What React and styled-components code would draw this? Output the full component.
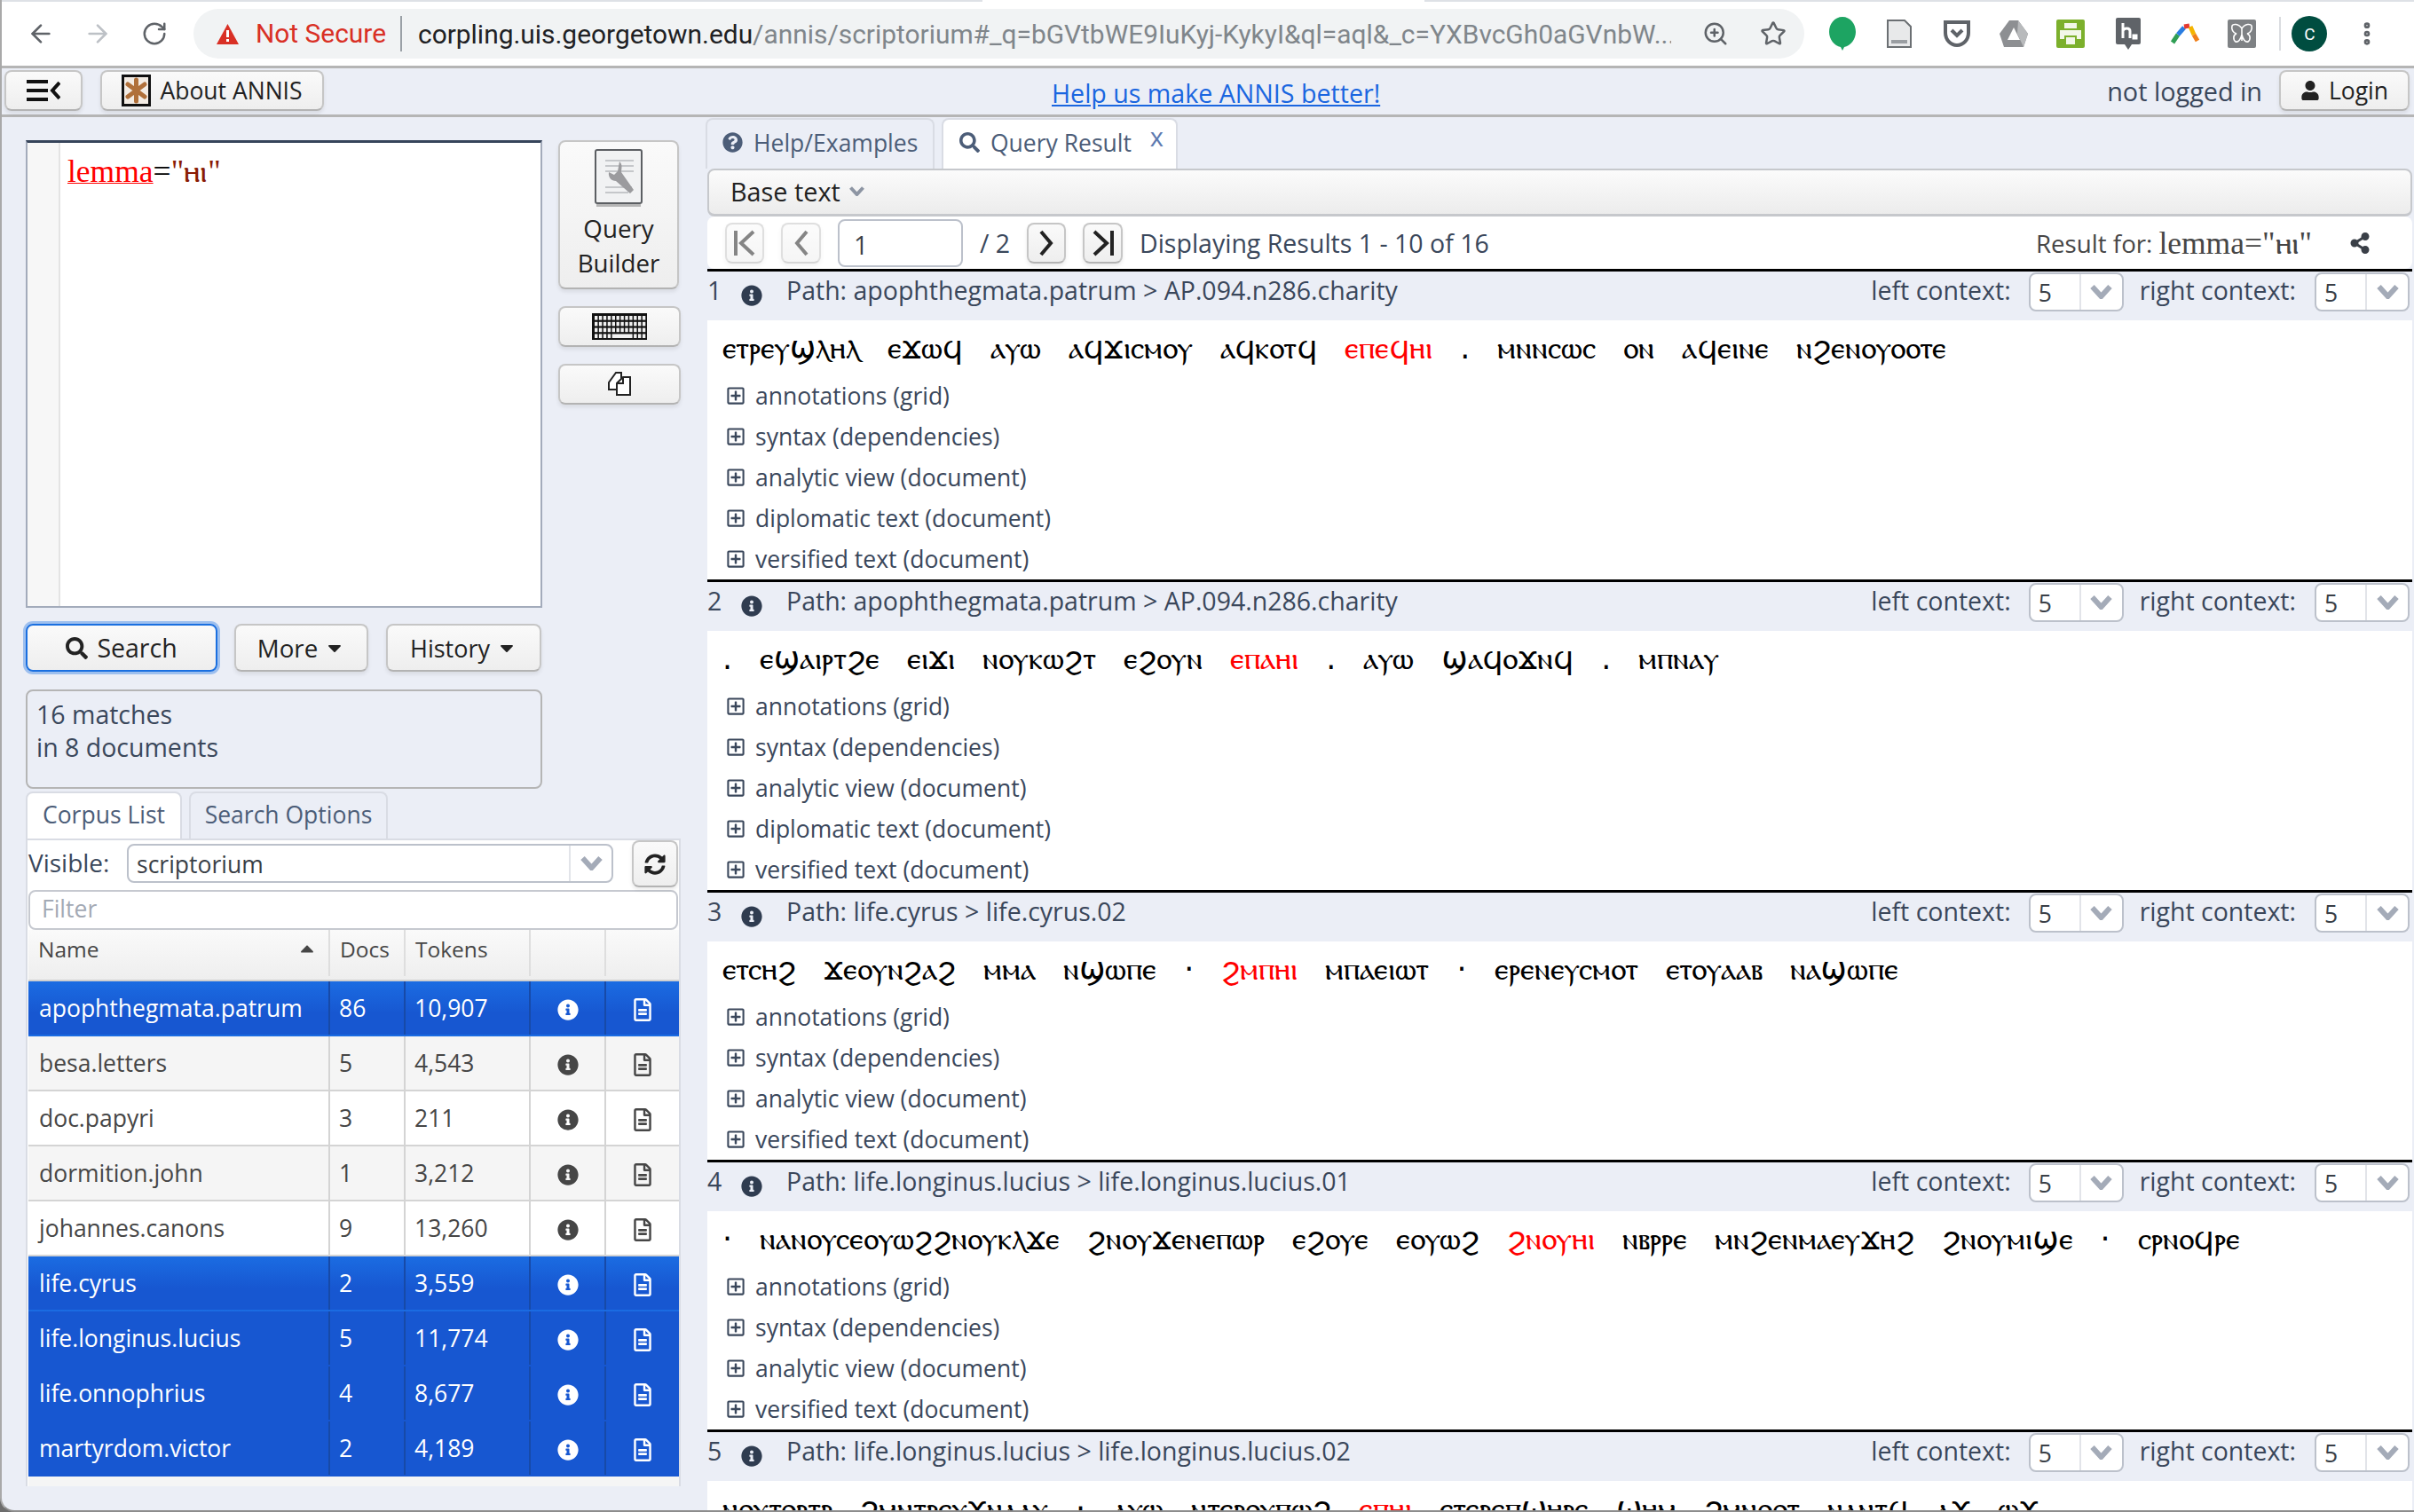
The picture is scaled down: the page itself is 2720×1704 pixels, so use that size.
import styled, { createGlobalStyle } from "styled-components";
import { ArrowLeft, ArrowRight, RotateCw, ZoomIn, Star, EllipsisVertical } from "lucide-react";
import {
  FaSearch,
  FaCaretDown,
  FaCaretUp,
  FaSyncAlt,
  FaInfoCircle,
  FaRegFileAlt,
  FaQuestionCircle,
  FaUser,
  FaShareAlt,
  FaRegPlusSquare,
} from "react-icons/fa";

const corpora = [
  { name: "apophthegmata.patrum", docs: "86", tokens: "10,907", selected: true, first: true },
  { name: "besa.letters", docs: "5", tokens: "4,543" },
  { name: "doc.papyri", docs: "3", tokens: "211" },
  { name: "dormition.john", docs: "1", tokens: "3,212" },
  { name: "johannes.canons", docs: "9", tokens: "13,260" },
  { name: "life.cyrus", docs: "2", tokens: "3,559", selected: true, first: true },
  { name: "life.longinus.lucius", docs: "5", tokens: "11,774", selected: true },
  { name: "life.onnophrius", docs: "4", tokens: "8,677", selected: true },
  { name: "martyrdom.victor", docs: "2", tokens: "4,189", selected: true },
];

const fullViews = [
  "annotations (grid)",
  "syntax (dependencies)",
  "analytic view (document)",
  "diplomatic text (document)",
  "versified text (document)",
];
const shortViews = [
  "annotations (grid)",
  "syntax (dependencies)",
  "analytic view (document)",
  "versified text (document)",
];

const results = [
  {
    path: "apophthegmata.patrum > AP.094.n286.charity",
    tokens: ["ⲉⲧⲣⲉⲩϣⲗⲏⲗ", "ⲉϫⲱϥ", "ⲁⲩⲱ", "ⲁϥϫⲓⲥⲙⲟⲩ", "ⲁϥⲕⲟⲧϥ", "*ⲉⲡⲉϥⲏⲓ", ".", "ⲙⲛⲛⲥⲱⲥ", "ⲟⲛ", "ⲁϥⲉⲓⲛⲉ", "ⲛϩⲉⲛⲟⲩⲟⲟⲧⲉ"],
    views: fullViews,
  },
  {
    path: "apophthegmata.patrum > AP.094.n286.charity",
    tokens: [".", "ⲉϣⲁⲓⲣⲧϩⲉ", "ⲉⲓϫⲓ", "ⲛⲟⲩⲕⲱϩⲧ", "ⲉϩⲟⲩⲛ", "*ⲉⲡⲁⲏⲓ", ".", "ⲁⲩⲱ", "ϣⲁϥⲟϫⲛϥ", ".", "ⲙⲡⲛⲁⲩ"],
    views: fullViews,
  },
  {
    path: "life.cyrus > life.cyrus.02",
    tokens: ["ⲉⲧⲥⲏϩ", "ϫⲉⲟⲩⲛϩⲁϩ", "ⲙⲙⲁ", "ⲛϣⲱⲡⲉ", "·", "*ϩⲙⲡⲏⲓ", "ⲙⲡⲁⲉⲓⲱⲧ", "·", "ⲉⲣⲉⲛⲉⲩⲥⲙⲟⲧ", "ⲉⲧⲟⲩⲁⲁⲃ", "ⲛⲁϣⲱⲡⲉ"],
    views: shortViews,
  },
  {
    path: "life.longinus.lucius > life.longinus.lucius.01",
    tokens: ["·", "ⲛⲁⲛⲟⲩⲥⲉⲟⲩⲱϩϩⲛⲟⲩⲕⲗϫⲉ", "ϩⲛⲟⲩϫⲉⲛⲉⲡⲱⲣ", "ⲉϩⲟⲩⲉ", "ⲉⲟⲩⲱϩ", "*ϩⲛⲟⲩⲏⲓ", "ⲛⲃⲣⲣⲉ", "ⲙⲛϩⲉⲛⲙⲁⲉⲩϫⲏϩ", "ϩⲛⲟⲩⲙⲓϣⲉ", "·", "ⲥⲣⲛⲟϥⲣⲉ"],
    views: shortViews,
  },
  {
    path: "life.longinus.lucius > life.longinus.lucius.02",
    tokens: ["ⲛⲟⲩⲧⲟⲣⲧⲣ", "ϩⲙⲛⲧⲣⲉⲩϫⲛⲁⲁⲩ", "·", "ⲁⲩⲱ", "ⲛⲧⲉⲣⲟⲩⲡⲱϩ", "*ⲉⲡⲏⲓ", "ⲉⲧⲉⲣⲉⲡϣⲏⲣⲉ", "ϣⲏⲙ", "ϩⲙⲛⲟⲟⲧ", "ⲛⲁⲛⲧϥ", "ⲁϫ", "ⲱϫ"],
    views: [],
  },
];

const GlobalStyle = createGlobalStyle`
  html, body {
    margin: 0;
    padding: 0;
    background: #6d6d6d;
  }
  * {
    box-sizing: border-box;
  }
`;

const Window = styled.div`
  width: 2720px;
  height: 1704px;
  display: flex;
  flex-direction: column;
  overflow: hidden;
  background: #ebeef6;
  border-left: 2px solid #a9a9a9;
  border-bottom: 2px solid #8d8d8d;
  border-bottom-left-radius: 16px;
  font-family: "Open Sans", sans-serif;
  font-size: 26.5px;
  color: #3a475b;
`;

/* browser chrome */
const Toolbar = styled.div`
  height: 77px;
  flex: none;
  display: flex;
  align-items: center;
  padding: 2px 0 0 26px;
  background: linear-gradient(to right, #dee1e6 1105px, #fff 1105px, #fff 1603px, #dee1e6 1603px) top / 100% 2px no-repeat, #fff;
  border-bottom: 3px solid #b5b5b5;
  font-family: Roboto, sans-serif;
`;

const NavButton = styled.span`
  width: 36px;
  margin-right: 28px;
  display: flex;
  justify-content: center;
  color: ${(p) => (p.$off ? "#bdc1c6" : "#5f6368")};
`;

const Omnibox = styled.div`
  width: 1815px;
  height: 56px;
  margin-left: -2px;
  padding: 0 16px 0 26px;
  display: flex;
  align-items: center;
  background: #f1f3f4;
  border-radius: 28px;
  font-size: 29.9px;
  color: #80868b;
  white-space: nowrap;
`;

const NotSecure = styled.span`
  margin-left: 19px;
  padding-right: 16px;
  border-right: 2px solid #9aa0a6;
  color: #d93025;
  line-height: 40px;
`;

const Url = styled.span`
  margin-left: 18px;
  width: 1412px;
  overflow: hidden;
  b {
    font-weight: 400;
    color: #202124;
  }
`;

const OmniIcon = styled.span`
  display: flex;
  color: #5f6368;
  margin-left: 35px;
`;

const ExtSpacer = styled.span`
  width: 11px;
  flex: none;
`;

const ExtIcon = styled.span`
  width: 64.3px;
  flex: none;
  display: flex;
  justify-content: center;
  align-items: center;
`;

const ExtDivider = styled.span`
  width: 2px;
  height: 38px;
  margin: 0 12px 0 10px;
  background: #dadce0;
`;

const Avatar = styled.span`
  width: 40px;
  height: 40px;
  border-radius: 50%;
  background: #004d40;
  color: #fff;
  font-size: 19px;
  display: flex;
  align-items: center;
  justify-content: center;
`;

const ExtMenu = styled.span`
  display: flex;
  margin-left: 29px;
  color: #5f6368;
`;

/* app header */
const AppHeader = styled.header`
  height: 55px;
  flex: none;
  display: flex;
  align-items: center;
  padding: 0 5px 2px 3px;
  border-bottom: 3px solid #b5b5b5;
`;

const Button = styled.button`
  height: ${(p) => p.$height || 46}px;
  width: ${(p) => (p.$width ? `${p.$width}px` : "auto")};
  margin-left: ${(p) => p.$left || 0}px;
  flex: none;
  padding: 0;
  display: inline-flex;
  flex-direction: ${(p) => (p.$stack ? "column" : "row")};
  align-items: center;
  justify-content: center;
  gap: ${(p) => p.$gap ?? 10}px;
  background: linear-gradient(#fafafa, #eeeeee);
  border: 2px solid #c6c6c6;
  border-bottom-color: #b3b3b3;
  border-radius: 8px;
  box-shadow: 0 3px 4px rgba(0, 0, 0, 0.08);
  color: #222;
  font-family: inherit;
  font-size: ${(p) => p.$size || 26.5}px;
  opacity: ${(p) => (p.$dim ? 0.55 : 1)};
`;

const FocusButton = styled(Button)`
  border-color: #1a6fe0;
  box-shadow: 0 0 0 3px #9dbfee;
`;

const HelpLink = styled.a`
  margin: 4px 0 0 820px;
  color: #1a66e0;
  font-size: 28.6px;
  text-decoration: underline;
`;

const UserState = styled.span`
  margin: 1px 19px 0 auto;
  font-size: 28.8px;
`;

const Main = styled.div`
  flex: 1;
  min-height: 0;
  display: flex;
`;

/* left side */
const LeftPanel = styled.aside`
  width: 795px;
  flex: none;
  padding: 26px 0 0 27px;
`;

const QueryRow = styled.div`
  display: flex;
  gap: 18px;
  height: 527px;
`;

const Editor = styled.div`
  width: 582px;
  display: flex;
  background: #fff;
  border: 2px solid #a3abbb;
  border-top: 3px solid #36445a;
`;

const Gutter = styled.div`
  width: 37px;
  background: #f7f7f7;
  border-right: 2px solid #e4e4e4;
`;

const QueryText = styled.div`
  padding: 12px 0 0 8px;
  font-family: "Liberation Serif", "DejaVu Serif", "DejaVu Sans", serif;
  font-size: 35.5px;
  line-height: 40px;
  color: #000;
`;

const Lemma = styled.span`
  color: #f00;
  text-decoration: underline;
  text-decoration-thickness: 1px;
  text-underline-offset: 1px;
`;

const QueryValue = styled.span`
  color: #8a1c05;
`;

const SideButtons = styled.div`
  width: 138px;
  display: flex;
  flex-direction: column;
  gap: 19px;
`;

const BuilderLabel = styled.span`
  line-height: 39px;
  margin-top: 4px;
  text-align: center;
  font-size: 27.7px;
`;

const ActionRow = styled.div`
  display: flex;
  margin-top: 18px;
`;

const StatusBox = styled.div`
  width: 582px;
  height: 112px;
  margin-top: 20px;
  padding: 8px 10px;
  line-height: 37px;
  border: 2px solid #b5b5b5;
  border-radius: 8px;
  font-size: 28.5px;
`;

const TabStrip = styled.div`
  display: flex;
  gap: ${(p) => p.$gap}px;
  height: ${(p) => p.$height}px;
  margin-top: ${(p) => p.$top}px;
  margin-left: ${(p) => p.$left || 0}px;
  flex: none;
`;

const Tab = styled.div`
  width: ${(p) => p.$width}px;
  display: flex;
  align-items: center;
  justify-content: ${(p) => (p.$center ? "center" : "flex-start")};
  gap: 12px;
  padding: 0 0 4px ${(p) => p.$pad || 0}px;
  position: relative;
  background: ${(p) => (p.$active ? "#fff" : "transparent")};
  border: 2px solid #d9dce4;
  border-bottom: 0;
  border-radius: 8px 8px 0 0;
  color: #4c5d78;
`;

const TabClose = styled.span`
  position: absolute;
  top: -1px;
  right: 14px;
  font-size: 29px;
  color: #5d7ab0;
`;

const CorpusPanel = styled.div`
  width: 738px;
  height: 730px;
  background: #fff;
  border: 2px solid #d9dce4;
  border-bottom: 0;
  overflow: hidden;
`;

const VisibleRow = styled.div`
  height: 56px;
  display: flex;
  align-items: flex-start;
`;

const VisibleLabel = styled.span`
  width: 112px;
  line-height: 50px;
  padding-left: 1px;
  font-size: 28px;
`;

const Combo = styled.div`
  width: ${(p) => p.$width}px;
  height: 44px;
  flex: none;
  margin: ${(p) => p.$margin || 0};
  display: flex;
  background: #fff;
  border: 2px solid #bcc1cb;
  border-radius: 8px;
  font-size: 26.5px;
  line-height: 42px;
  overflow: hidden;
`;

const ComboValue = styled.span`
  flex: 1;
  padding-left: 9px;
  color: #3a3f47;
`;

const ComboArrow = styled.span`
  width: 48px;
  flex: none;
  display: flex;
  align-items: center;
  justify-content: center;
  border-left: 2px solid #e2e4e9;
  color: #a4abb8;
`;

const FilterInput = styled.div`
  height: 45px;
  margin: 0 1px;
  padding-left: 13px;
  border: 2px solid #c6c9d0;
  border-radius: 8px;
  font-size: 26.5px;
  line-height: 38px;
  color: #a3a9b4;
`;

const CorpusTable = styled.div`
  margin-left: 1px;
  width: 733px;
`;

const columns = "340px 85px 141px 85px 82px";

const HeadRow = styled.div`
  display: grid;
  grid-template-columns: ${columns};
  height: 58px;
  background: linear-gradient(#fafafa, #eeeeee);
  border-bottom: 2px solid #d0d0d0;
  font-size: 24.5px;
  color: #464646;
`;

const HeadCell = styled.div`
  padding: 4px 0 0 11px;
  line-height: 36px;
  display: flex;
  justify-content: space-between;
  border-right: ${(p) => (p.$last ? 0 : "2px solid #dedede")};
  margin-bottom: 4px;
`;

const SortMark = styled.span`
  margin: 2px 12px 0 0;
  color: #464646;
`;

const Row = styled.div`
  display: grid;
  grid-template-columns: ${columns};
  height: 62px;
  background: ${(p) =>
    p.$selected
      ? p.$first
        ? "linear-gradient(#1b6ce2, #1757d1 60%)"
        : "#1757d1"
      : p.$odd
        ? "#f5f5f5"
        : "#fff"};
  color: ${(p) => (p.$selected ? "#fff" : "#464646")};
  border-bottom: 2px solid ${(p) => (p.$selected ? "transparent" : "#d4d4d4")};
`;

const Cell = styled.div`
  display: flex;
  align-items: center;
  justify-content: ${(p) => (p.$icon ? "center" : "flex-start")};
  padding-left: ${(p) => p.$pad || 0}px;
  padding-top: ${(p) => (p.$icon ? 4 : 0)}px;
  border-right: ${(p) => (p.$last ? "0" : `2px solid ${p.$selected ? "#174aa8" : "#d4d4d4"}`)};
`;

/* right side */
const RightPanel = styled.section`
  flex: 1;
  min-width: 0;
  display: flex;
  flex-direction: column;
`;

const BaseBar = styled.div`
  height: 54px;
  margin: 0 2px 0 0;
  padding: 0 0 2px 24px;
  display: flex;
  align-items: center;
  gap: 10px;
  flex: none;
  background: linear-gradient(#fbfbfb, #ececec);
  border: 2px solid #c6c8cc;
  border-bottom-width: 3px;
  border-radius: 8px;
  color: #222;
  font-size: 28.8px;
`;

const BaseChevron = styled.span`
  display: flex;
  color: #8d95a3;
`;

const PagerBar = styled.div`
  height: 59px;
  margin: 0 2px 0 0;
  padding: 0 47px 0 20px;
  flex: none;
  display: flex;
  align-items: center;
  background: #fff;
  border-radius: 8px;
  font-size: 28.5px;
`;

const PageInput = styled.div`
  width: 141px;
  height: 54px;
  margin-left: 19px;
  padding: 8px 0 0 16px;
  background: #fff;
  border: 2px solid #bcc1cb;
  border-radius: 8px;
  color: #3a3f47;
`;

const PageCount = styled.span`
  width: 53px;
  margin: 0 0 0 19px;
  flex: none;
`;

const PageInfo = styled.span`
  margin-left: 19px;
`;

const ResultFor = styled.span`
  margin-left: auto;
  display: flex;
  align-items: center;
  color: #464646;
  font-size: 27.7px;
`;

const SerifQuery = styled.span`
  margin-left: 7px;
  font-family: "Liberation Serif", "DejaVu Serif", "DejaVu Sans", serif;
  font-size: 35.5px;
`;

const ShareIcon = styled.span`
  display: flex;
  margin-left: 42px;
  color: #3a3f47;
`;

const ResultList = styled.div`
  flex: 1;
  min-height: 0;
  overflow: hidden;
  margin-right: 2px;
  background: #fff;
`;

const ResultBlock = styled.article`
  border-top: 3px solid #000;
`;

const ResultHead = styled.div`
  height: 55px;
  display: flex;
  align-items: flex-start;
  padding-right: 3px;
  background: #ebeef6;
  font-size: 28.5px;
  line-height: 42px;
`;

const ResultNumber = styled.span`
  width: 38px;
  flex: none;
`;

const ResultInfo = styled.span`
  width: 51px;
  flex: none;
  display: flex;
  padding-top: 15px;
  color: #2f3c50;
`;

const ResultPath = styled.span`
  flex: 1;
`;

const ContextLabel = styled.span`
  margin-left: ${(p) => p.$left}px;
`;

const TokenLine = styled.div`
  height: 62px;
  padding: 0 0 0 17px;
  display: flex;
  align-items: center;
  gap: 31px;
  white-space: nowrap;
  font-family: "DejaVu Sans", sans-serif;
  font-size: 34.8px;
  color: #000;
`;

const Token = styled.span`
  color: ${(p) => (p.$hit ? "#f00" : "#000")};
`;

const ViewRow = styled.div`
  height: 46px;
  padding-left: 21px;
  display: flex;
  align-items: center;
  gap: 11px;
`;

const ComboChevron = () => (
  <svg width="25" height="16" viewBox="0 0 25 16" fill="none" stroke="currentColor" strokeWidth="6">
    <path d="M2.5 2 12.5 13l10-11" />
  </svg>
);

const BaseArrow = () => (
  <svg width="17" height="11" viewBox="0 0 17 11" fill="none" stroke="currentColor" strokeWidth="4">
    <path d="m1.5 1.5 7 7.500 7-7.500" />
  </svg>
);

const BackStep = ({ flip }) => (
  <svg width="26" height="32" viewBox="0 0 26 32" fill="none" stroke="currentColor" strokeWidth="4" style={flip ? { transform: "scaleX(-1)" } : undefined}>
    <path d="M3 2v28M23 3 9 16l14 13" />
  </svg>
);

const Chevron = ({ flip }) => (
  <svg width="18" height="32" viewBox="0 0 18 32" fill="none" stroke="currentColor" strokeWidth="4" style={flip ? { transform: "scaleX(-1)" } : undefined}>
    <path d="M15 3 4 16l11 13" />
  </svg>
);

const MenuIcon = () => (
  <svg width="38" height="26" viewBox="0 0 38 26" fill="#111">
    <path d="M0 1h24v4H0zM0 11h24v4H0zM0 21h24v4H0z" />
    <path d="M37 4 29 13l8 9" fill="none" stroke="#111" strokeWidth="4" />
  </svg>
);

const AnnisLogo = () => (
  <svg width="33" height="36" viewBox="0 0 33 36">
    <rect x="1.5" y="1.5" width="30" height="33" fill="#f3ece4" stroke="#111" strokeWidth="3" />
    <g stroke="#b0703a" strokeWidth="5" strokeLinecap="round">
      <path d="M16.500 6v24M7 11l19 14M26 11 7 25" />
    </g>
  </svg>
);

const BuilderIcon = () => (
  <svg width="54" height="66" viewBox="0 0 54 66">
    <rect x="1" y="1" width="52" height="60" rx="2" fill="#f1f2f3" stroke="#5c5f63" strokeWidth="2" />
    <rect x="2" y="62" width="50" height="3" fill="#b5b5b5" />
    <g fill="#c5c7ca">
      <rect x="12" y="12" width="32" height="2" />
      <rect x="12" y="18" width="32" height="2" />
      <rect x="12" y="24" width="32" height="2" />
      <rect x="12" y="42" width="30" height="2" />
      <rect x="12" y="48" width="26" height="2" />
    </g>
    <path d="M28 14c4 4 2 8 2 12l14 20-4 4-16-14c-5 0-9-4-8-10l6 3 4-4z" fill="#9b9b9e" />
  </svg>
);

const KeyboardIcon = () => {
  const keys = [];
  for (let r = 0; r < 4; r++) {
    for (let c = 0; c < 12; c++) {
      if (r === 3 && c > 3 && c < 9) continue;
      keys.push(<rect key={`${r}-${c}`} x={3 + c * 4.9} y={3 + r * 6.8} width="3.4" height="4.6" fill="#f0f0f0" />);
    }
  }
  return (
    <svg width="62" height="30" viewBox="0 0 62 30">
      <rect width="62" height="30" fill="#111" />
      {keys}
      <rect x="22.6" y="23.4" width="23" height="4.6" fill="#f0f0f0" />
    </svg>
  );
};

const CopyIcon = () => (
  <svg width="28" height="28" viewBox="0 0 28 28" fill="#fff" stroke="#222" strokeWidth="2">
    <path d="M2 12 10 1h6v17l-3 2H2z" />
    <path d="M11 26V13l7-7h8v20z" />
    <path d="M18 6v7h-7" fill="none" />
  </svg>
);

const WarnIcon = () => (
  <svg width="25" height="23" viewBox="0 0 25 23">
    <path d="M12.500 0 25 23H0z" fill="#d93025" />
    <path d="M11 7h3v8h-3zM11 17h3v3h-3z" fill="#fff" />
  </svg>
);

const PocketIcon = () => (
  <svg width="32" height="32" viewBox="0 0 32 32" fill="none">
    <path d="M3 3h26v12a13 14 0 0 1-26 0z" stroke="#5f6368" strokeWidth="4" fill="#fff" />
    <path d="m10 12 6 6 6-6" stroke="#5f6368" strokeWidth="4" />
  </svg>
);

const HypoIcon = () => (
  <svg width="28" height="36" viewBox="0 0 28 36">
    <path d="M2 0h24a2 2 0 0 1 2 2v26a2 2 0 0 1-2 2h-8l-4 6-4-6H2a2 2 0 0 1-2-2V2a2 2 0 0 1 2-2z" fill="#5f6368" />
    <path d="M8 6v17M8 15c1-4 8-4 8 0v8M20 20h3v3h-3z" fill="none" stroke="#fff" strokeWidth="3" />
  </svg>
);

const ExtensionIcons = () => (
  <>
    <ExtIcon>
      <svg width="30" height="38" viewBox="0 0 30 38">
        <path d="M15 0c9 0 15 8 15 17 0 8-6 16-13 17l-2 4-2-4C6 33 0 25 0 17 0 8 6 0 15 0z" fill="#1da462" />
      </svg>
    </ExtIcon>
    <ExtIcon>
      <svg width="28" height="32" viewBox="0 0 28 32">
        <path d="M1 1h19l7 7v23H1z" fill="#e8e9ea" stroke="#6b6f73" strokeWidth="2" />
        <rect x="5" y="23" width="18" height="4" fill="#9a9ea2" />
      </svg>
    </ExtIcon>
    <ExtIcon>
      <PocketIcon />
    </ExtIcon>
    <ExtIcon>
      <svg width="32" height="30" viewBox="0 0 32 30">
        <path d="M11 0h10l11 15-5 15H5L0 15z" fill="#8d8f92" />
        <path d="M16 8 9 22h14z" fill="#fff" />
        <path d="M21 0l11 15-5 15-7-15z" fill="#b8babc" />
      </svg>
    </ExtIcon>
    <ExtIcon>
      <svg width="32" height="32" viewBox="0 0 32 32">
        <rect width="32" height="32" rx="2" fill="#7cb02c" />
        <path d="M9 4h14v6H9zM4 12h24v10h-5v-4H9v4H4zM11 20h10v8H11z" fill="#f2f7e8" />
      </svg>
    </ExtIcon>
    <ExtIcon>
      <HypoIcon />
    </ExtIcon>
    <ExtIcon>
      <svg width="34" height="26" viewBox="0 0 34 26" fill="none" strokeWidth="5">
        <path d="M3 23 9 14" stroke="#2f9e54" />
        <path d="M9 14 16 6" stroke="#2a7de1" />
        <path d="M16 5 22 4" stroke="#e5392f" />
        <path d="M23 5 27 14" stroke="#f4b400" />
        <path d="M27 14 31 21" stroke="#ef7f1a" />
      </svg>
    </ExtIcon>
    <ExtIcon>
      <svg width="32" height="32" viewBox="0 0 32 32" fill="none">
        <rect width="32" height="32" rx="2" fill="#7e8184" />
        <path d="M16 10C12 4 6 5 5 7c-1 4 1 8 5 9-4 1-4 7-1 9 3 1 6-3 7-8 1 5 4 9 7 8 3-2 3-8-1-9 4-1 6-5 5-9-1-2-7-3-11 3zM16 10v14" stroke="#fff" strokeWidth="1.6" />
      </svg>
    </ExtIcon>
  </>
);

const tokenKey = (t, i) => `${t}-${i}`;

const ResultItem = ({ result, index }) => (
  <ResultBlock>
    <ResultHead>
      <ResultNumber>{index + 1}</ResultNumber>
      <ResultInfo>
        <FaInfoCircle size={24} />
      </ResultInfo>
      <ResultPath>Path: {result.path}</ResultPath>
      <ContextLabel $left={0}>left context:</ContextLabel>
      <Combo $width={107} $margin="1px 0 0 20px">
        <ComboValue>5</ComboValue>
        <ComboArrow>
          <ComboChevron />
        </ComboArrow>
      </Combo>
      <ContextLabel $left={18}>right context:</ContextLabel>
      <Combo $width={107} $margin="1px 0 0 21px">
        <ComboValue>5</ComboValue>
        <ComboArrow>
          <ComboChevron />
        </ComboArrow>
      </Combo>
    </ResultHead>
    <TokenLine>
      {result.tokens.map((t, i) => (
        <Token key={tokenKey(t, i)} $hit={t.startsWith("*")}>
          {t.replace("*", "")}
        </Token>
      ))}
    </TokenLine>
    {result.views.map((v) => (
      <ViewRow key={v}>
        <FaRegPlusSquare size={22} />
        {v}
      </ViewRow>
    ))}
  </ResultBlock>
);

const App = () => {
  return (
    <Window>
      <GlobalStyle />
      <Toolbar>
        <NavButton>
          <ArrowLeft size={32} strokeWidth={2} />
        </NavButton>
        <NavButton $off>
          <ArrowRight size={32} strokeWidth={2} />
        </NavButton>
        <NavButton>
          <RotateCw size={30} strokeWidth={2} />
        </NavButton>
        <Omnibox>
          <WarnIcon />
          <NotSecure>Not Secure</NotSecure>
          <Url>
            <b>corpling.uis.georgetown.edu</b>/annis/scriptorium#_q=bGVtbWE9IuKyj-KykyI&ql=aql&_c=YXBvcGh0aGVnbW...
          </Url>
          <OmniIcon>
            <ZoomIn size={30} strokeWidth={2} />
          </OmniIcon>
          <OmniIcon>
            <Star size={30} strokeWidth={2} />
          </OmniIcon>
        </Omnibox>
        <ExtSpacer />
        <ExtensionIcons />
        <ExtDivider />
        <Avatar>C</Avatar>
        <ExtMenu>
          <EllipsisVertical size={32} strokeWidth={3} />
        </ExtMenu>
      </Toolbar>

      <AppHeader>
        <Button $width={88}>
          <MenuIcon />
        </Button>
        <Button $width={252} $left={20} $gap={10}>
          <AnnisLogo />
          About ANNIS
        </Button>
        <HelpLink href="#">Help us make ANNIS better!</HelpLink>
        <UserState>not logged in</UserState>
        <Button $width={147} $gap={10}>
          <FaUser size={22} />
          Login
        </Button>
      </AppHeader>

      <Main>
        <LeftPanel>
          <QueryRow>
            <Editor>
              <Gutter />
              <QueryText>
                <Lemma>lemma</Lemma>=<QueryValue>"ⲏⲓ"</QueryValue>
              </QueryText>
            </Editor>
            <SideButtons>
              <Button as="div" $height={168} $width={136} $stack $gap={0}>
                <BuilderIcon />
                <BuilderLabel>
                  Query
                  <br />
                  Builder
                </BuilderLabel>
              </Button>
              <Button $width={138}>
                <KeyboardIcon />
              </Button>
              <Button $width={138}>
                <CopyIcon />
              </Button>
            </SideButtons>
          </QueryRow>

          <ActionRow>
            <FocusButton $width={216} $height={54} $size={28.5}>
              <FaSearch size={25} />
              Search
            </FocusButton>
            <Button $width={151} $height={54} $left={19} $gap={7} $size={27.7}>
              More
              <FaCaretDown size={24} />
            </Button>
            <Button $width={175} $height={54} $left={20} $gap={7} $size={27}>
              History
              <FaCaretDown size={24} />
            </Button>
          </ActionRow>

          <StatusBox>
            16 matches
            <br />
            in 8 documents
          </StatusBox>

          <TabStrip $gap={8} $height={53} $top={3}>
            <Tab $width={176} $active $center>
              Corpus List
            </Tab>
            <Tab $width={224} $center>
              Search Options
            </Tab>
          </TabStrip>

          <CorpusPanel>
            <VisibleRow>
              <VisibleLabel>Visible:</VisibleLabel>
              <Combo $width={548} $margin="4px 0 0 0">
                <ComboValue>scriptorium</ComboValue>
                <ComboArrow>
                  <ComboChevron />
                </ComboArrow>
              </Combo>
              <Button $width={52} $height={53} $left={21}>
                <FaSyncAlt size={24} />
              </Button>
            </VisibleRow>
            <FilterInput>Filter</FilterInput>
            <CorpusTable>
              <HeadRow>
                <HeadCell>
                  Name
                  <SortMark>
                    <FaCaretUp size={24} />
                  </SortMark>
                </HeadCell>
                <HeadCell>Docs</HeadCell>
                <HeadCell>Tokens</HeadCell>
                <HeadCell />
                <HeadCell $last />
              </HeadRow>
              {corpora.map((c, i) => (
                <Row key={c.name} $selected={c.selected} $first={c.first} $odd={i % 2 === 1}>
                  <Cell $pad={12} $selected={c.selected}>
                    {c.name}
                  </Cell>
                  <Cell $pad={10} $selected={c.selected}>
                    {c.docs}
                  </Cell>
                  <Cell $pad={10} $selected={c.selected}>
                    {c.tokens}
                  </Cell>
                  <Cell $icon $selected={c.selected}>
                    <FaInfoCircle size={24} />
                  </Cell>
                  <Cell $icon $last>
                    <FaRegFileAlt size={26} />
                  </Cell>
                </Row>
              ))}
              <Row $odd />
            </CorpusTable>
          </CorpusPanel>
        </LeftPanel>

        <RightPanel>
          <TabStrip $gap={8} $height={57} $top={1} $left={-2}>
            <Tab $width={258} $pad={17}>
              <FaQuestionCircle size={23} />
              Help/Examples
            </Tab>
            <Tab $width={266} $active $pad={18}>
              <FaSearch size={23} />
              Query Result
              <TabClose>x</TabClose>
            </Tab>
          </TabStrip>
          <BaseBar>
            Base text
            <BaseChevron>
              <BaseArrow />
            </BaseChevron>
          </BaseBar>
          <PagerBar>
            <Button $width={44} $dim>
              <BackStep />
            </Button>
            <Button $width={45} $left={19} $dim>
              <Chevron />
            </Button>
            <PageInput>1</PageInput>
            <PageCount>/ 2</PageCount>
            <Button $width={44}>
              <Chevron flip />
            </Button>
            <Button $width={45} $left={19}>
              <BackStep flip />
            </Button>
            <PageInfo>Displaying Results 1 - 10 of 16</PageInfo>
            <ResultFor>
              Result for:
              <SerifQuery>lemma="ⲏⲓ"</SerifQuery>
              <ShareIcon>
                <FaShareAlt size={24} />
              </ShareIcon>
            </ResultFor>
          </PagerBar>
          <ResultList>
            {results.map((r, i) => (
              <ResultItem key={`${r.path}-${i}`} result={r} index={i} />
            ))}
          </ResultList>
        </RightPanel>
      </Main>
    </Window>
  );
};

export default App;
